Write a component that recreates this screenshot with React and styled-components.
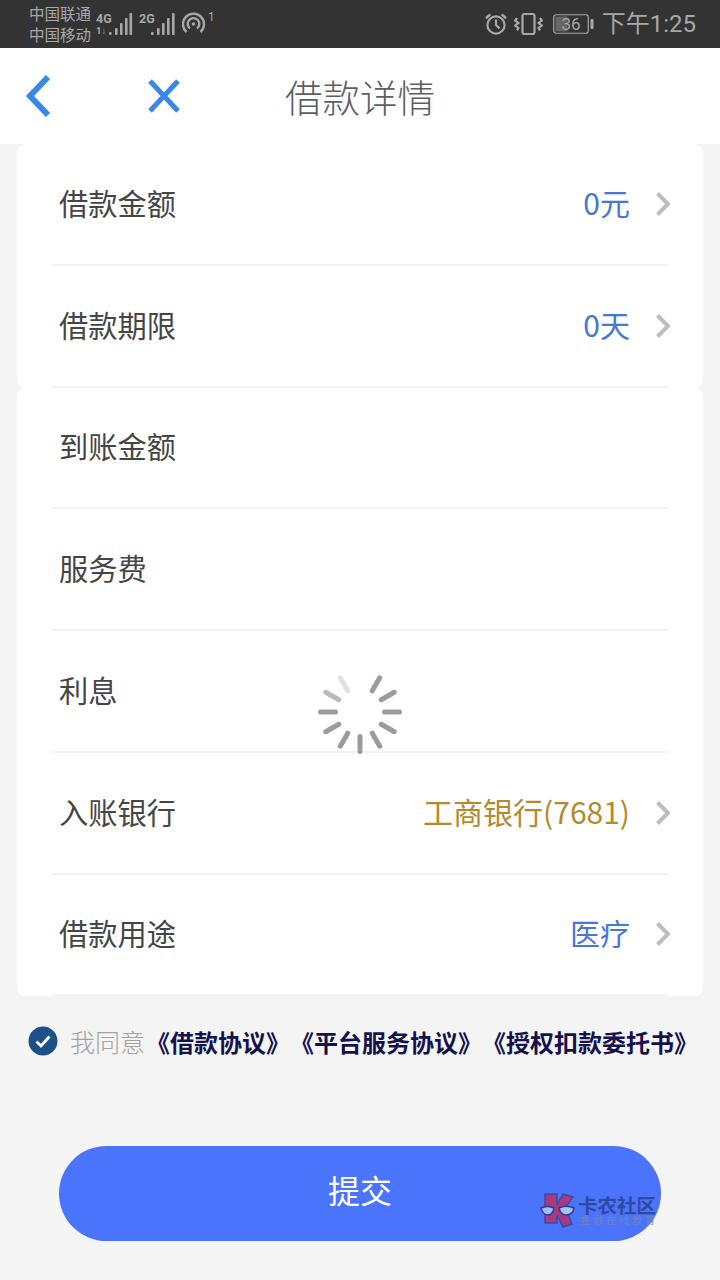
import React from 'react';
import styled, { createGlobalStyle } from 'styled-components';

const GlobalStyle = createGlobalStyle`
  html, body { margin: 0; padding: 0; background: #f4f4f4; }
  body { font-family: "Noto Sans CJK SC", "Noto Sans", sans-serif; }
`;

const Page = styled.div`
  position: relative;
  width: 720px;
  height: 1280px;
  overflow: hidden;
  background: #f4f4f4;
`;

const StatusBar = styled.div`
  display: flex;
  align-items: center;
  justify-content: space-between;
  height: 48px;
  padding: 0 24px 0 29px;
  box-sizing: border-box;
  background: #333333;
  color: #a8a8a8;
`;

const StatusGroup = styled.div`
  display: flex;
  align-items: center;
`;

const Carriers = styled.div`
  width: 67px;
  font-size: 15.5px;
  line-height: 21px;
  white-space: nowrap;
`;

const Clock = styled.span`
  margin-left: 8px;
  font-family: "Roboto", "Noto Sans CJK SC", sans-serif;
  font-size: 24px;
  line-height: 48px;
  white-space: nowrap;
`;

const Header = styled.header`
  display: flex;
  align-items: center;
  height: 96px;
  background: #ffffff;
`;

const IconSlot = styled.div`
  display: flex;
  width: ${p => p.$width}px;
  padding-left: ${p => p.$left}px;
  box-sizing: border-box;
`;

const Title = styled.h1`
  margin: 0;
  font-size: 37.5px;
  font-weight: 300;
  line-height: 96px;
  color: #5c5f63;
`;

const Card = styled.section`
  width: 686px;
  margin: 0 auto;
  padding: 0 35px;
  box-sizing: border-box;
  background: #ffffff;
  border-radius: 8px;
`;

const Row = styled.div`
  display: flex;
  align-items: center;
  justify-content: space-between;
  height: 121.75px;
  padding-left: 7px;
  box-sizing: border-box;
  border-bottom: 2px solid #f3f3f3;
`;

const Label = styled.span`
  margin-bottom: 4px;
  font-size: 29.25px;
  font-weight: 400;
  color: #454545;
`;

const ValueGroup = styled.div`
  display: flex;
  align-items: center;
  gap: 26px;
  margin-right: -2px;
`;

const Value = styled.span`
  margin-bottom: 4px;
  font-size: 30px;
  font-weight: 400;
  color: ${p => p.$color};
`;

const Agreement = styled.div`
  display: flex;
  align-items: center;
  height: 40px;
  margin-top: 25px;
  padding-left: 28px;
`;

const AgreeText = styled.span`
  margin-left: 12px;
  font-size: 25px;
  font-weight: 300;
  color: #a2a2a2;
  white-space: nowrap;
`;

const DocLinks = styled.span`
  display: flex;
  margin-left: 1px;
`;

const DocLink = styled.span`
  font-size: 24px;
  font-weight: 700;
  color: #14124e;
  white-space: nowrap;
`;

const Submit = styled.button`
  display: block;
  width: 602px;
  height: 95px;
  margin: 85px 0 0 59px;
  padding: 0 0 9px;
  border: none;
  border-radius: 48px;
  background: #4a74fb;
  color: #ffffff;
  font-family: inherit;
  font-size: 32px;
  font-weight: 400;
`;

const Spinner = styled.svg`
  position: absolute;
  left: 316px;
  top: 668px;
`;

const Watermark = styled.div`
  position: absolute;
  left: 540px;
  top: 1193px;
  display: flex;
  align-items: center;
  gap: 3px;
`;

const WatermarkText = styled.div`
  display: flex;
  flex-direction: column;
  align-items: flex-start;
`;

const WatermarkTitle = styled.span`
  font-size: 19.5px;
  font-weight: 700;
  line-height: 18px;
  color: #2f4a9e;
  white-space: nowrap;
`;

const WatermarkSub = styled.span`
  margin-left: 2px;
  font-size: 10px;
  letter-spacing: 3px;
  line-height: 12px;
  color: #6d84c6;
  white-space: nowrap;
`;

const SignalIcon = ({ top, bottom, bars }) => (
  <svg width="43" height="26" viewBox="0 0 43 26" fill="#a8a8a8">
    <text x="0" y="12" fontFamily="Roboto, sans-serif" fontSize="12.5" fontWeight="700">{top}</text>
    {bottom && <text x="0" y="23" fontFamily="Roboto, sans-serif" fontSize="9.5" fontWeight="700">{bottom}</text>}
    {bars.map(([x, h]) => (
      <rect key={x} x={x} y={24 - h} width="2.6" height={h} rx="1" />
    ))}
  </svg>
);

const Hotspot = () => (
  <svg width="34" height="26" viewBox="0 0 34 26" fill="none" stroke="#a8a8a8" strokeWidth="2.4">
    <path d="M4.5 21 A10.5 10.5 0 1 1 18.5 21" />
    <path d="M8 17.5 A5.8 5.8 0 1 1 15 17.5" />
    <circle cx="11.5" cy="13" r="1.8" fill="#a8a8a8" strokeWidth="0" />
    <text x="26" y="10" fontFamily="Roboto, sans-serif" fontSize="12" fill="#a8a8a8" stroke="none">1</text>
  </svg>
);

const Alarm = () => (
  <svg width="24" height="24" viewBox="0 0 24 24" fill="none" stroke="#a8a8a8" strokeWidth="2.2">
    <circle cx="12" cy="13" r="8.6" />
    <path d="M12 7.5V13l3.6 3.4" />
    <path d="M2 6.2 6.2 2.4M22 6.2l-4.2-3.8" strokeWidth="2.6" />
  </svg>
);

const Vibrate = () => (
  <svg width="29" height="24" viewBox="0 0 29 24" fill="none" stroke="#a8a8a8" strokeWidth="2.2" style={{ marginLeft: 6 }}>
    <rect x="8.5" y="2" width="12" height="20" rx="2" />
    <path d="M3 6 1.2 8.5 4.4 11 1.2 13.5 4.4 16 3 18.5" />
    <path d="M26 6l1.8 2.5L24.6 11l3.2 2.5-3.2 2.5 1.4 2.5" />
  </svg>
);

const Battery = () => (
  <svg width="41" height="22" viewBox="0 0 41 22" style={{ marginLeft: 10 }}>
    <rect x="0.75" y="1.75" width="34.5" height="18.5" rx="2.5" fill="none" stroke="#a8a8a8" strokeWidth="1.2" />
    <rect x="2.5" y="3.5" width="12" height="15" fill="#666666" />
    <rect x="37.5" y="6" width="3" height="10" rx="1" fill="#a8a8a8" />
    <text x="18" y="17" textAnchor="middle" fontFamily="Roboto, sans-serif" fontSize="17" fill="#a8a8a8">36</text>
  </svg>
);

const BackIcon = () => (
  <svg width="26" height="44" viewBox="0 0 26 44" fill="none" stroke="#3a87ec" strokeWidth="6">
    <path d="M23 3 5 22 23 41" />
  </svg>
);

const CloseIcon = () => (
  <svg width="34" height="36" viewBox="0 0 34 36" fill="none" stroke="#3a87ec" strokeWidth="5">
    <path d="M3 3 31 33M31 3 3 33" />
  </svg>
);

const Chevron = () => (
  <svg width="14" height="24" viewBox="0 0 14 24" fill="none" stroke="#bdbdbd" strokeWidth="4">
    <path d="M1.5 1.5 12 12 1.5 22.5" />
  </svg>
);

const CheckCircle = () => (
  <svg width="30" height="30" viewBox="0 0 30 30">
    <circle cx="15" cy="15" r="14.5" fill="#1d5089" />
    <path d="M8.5 15.5l4.5 4.5 8.5-9.5" fill="none" stroke="#ffffff" strokeWidth="2.8" />
  </svg>
);

const KLogo = () => (
  <svg width="35" height="35" viewBox="0 0 35 35">
    <path d="M5 1h12v11l6-11 10 3-8 11 7 16-9 3-6-12v8H5z" fill="#a83a80" stroke="#3f4a9c" strokeWidth="1.5" />
    <path d="M1 15c4-2 9-2 13 0-1 5-3 7-6 7s-6-3-7-7zM19 15c4-2 10-2 15 0-1 5-4 7-8 7s-6-3-7-7z" fill="#a9bdf7" stroke="#2f3f96" strokeWidth="1.5" />
  </svg>
);

const spokes = [
  [30, '#9b9b9b'], [60, '#9b9b9b'], [90, '#9b9b9b'], [120, '#9b9b9b'], [150, '#9b9b9b'],
  [180, '#9b9b9b'], [210, '#9b9b9b'], [240, '#9b9b9b'], [270, '#9b9b9b'], [300, '#bcbcbc'], [330, '#e0e0e0'],
];

const topRows = [
  { label: '借款金额', value: '0元', color: '#4a75d8' },
  { label: '借款期限', value: '0天', color: '#4a75d8' },
];

const bottomRows = [
  { label: '到账金额' },
  { label: '服务费' },
  { label: '利息' },
  { label: '入账银行', value: '工商银行(7681)', color: '#b38a2e' },
  { label: '借款用途', value: '医疗', color: '#4a75d8' },
];

const renderRow = row => (
  <Row key={row.label}>
    <Label>{row.label}</Label>
    {row.value && (
      <ValueGroup>
        <Value $color={row.color}>{row.value}</Value>
        <Chevron />
      </ValueGroup>
    )}
  </Row>
);

export default function App() {
  return (
    <Page>
      <GlobalStyle />
      <StatusBar>
        <StatusGroup>
          <Carriers>中国联通<br />中国移动</Carriers>
          <SignalIcon top="4G" bottom="1↓" bars={[[13, 3], [19, 7], [24, 12], [29, 17], [33.5, 22]]} />
          <SignalIcon top="2G" bars={[[12, 3], [18, 7], [23, 12], [28, 17], [33, 22]]} />
          <Hotspot />
        </StatusGroup>
        <StatusGroup>
          <Alarm />
          <Vibrate />
          <Battery />
          <Clock>下午1:25</Clock>
        </StatusGroup>
      </StatusBar>
      <Header>
        <IconSlot $width={147} $left={25}><BackIcon /></IconSlot>
        <IconSlot $width={138} $left={0}><CloseIcon /></IconSlot>
        <Title>借款详情</Title>
      </Header>
      <Card>{topRows.map(renderRow)}</Card>
      <Card>{bottomRows.map(renderRow)}</Card>
      <Agreement>
        <CheckCircle />
        <AgreeText>我同意</AgreeText>
        <DocLinks>
          <DocLink>《借款协议》</DocLink>
          <DocLink>《平台服务协议》</DocLink>
          <DocLink>《授权扣款委托书》</DocLink>
        </DocLinks>
      </Agreement>
      <Submit>提交</Submit>
      <Spinner width="88" height="88" viewBox="-44 -44 88 88">
        {spokes.map(([angle, color]) => (
          <rect key={angle} x="-2.5" y="-42" width="5" height="20" rx="2.5" fill={color} transform={`rotate(${angle})`} />
        ))}
      </Spinner>
      <Watermark>
        <KLogo />
        <WatermarkText>
          <WatermarkTitle>卡农社区</WatermarkTitle>
          <WatermarkSub>金融在线教育</WatermarkSub>
        </WatermarkText>
      </Watermark>
    </Page>
  );
}
